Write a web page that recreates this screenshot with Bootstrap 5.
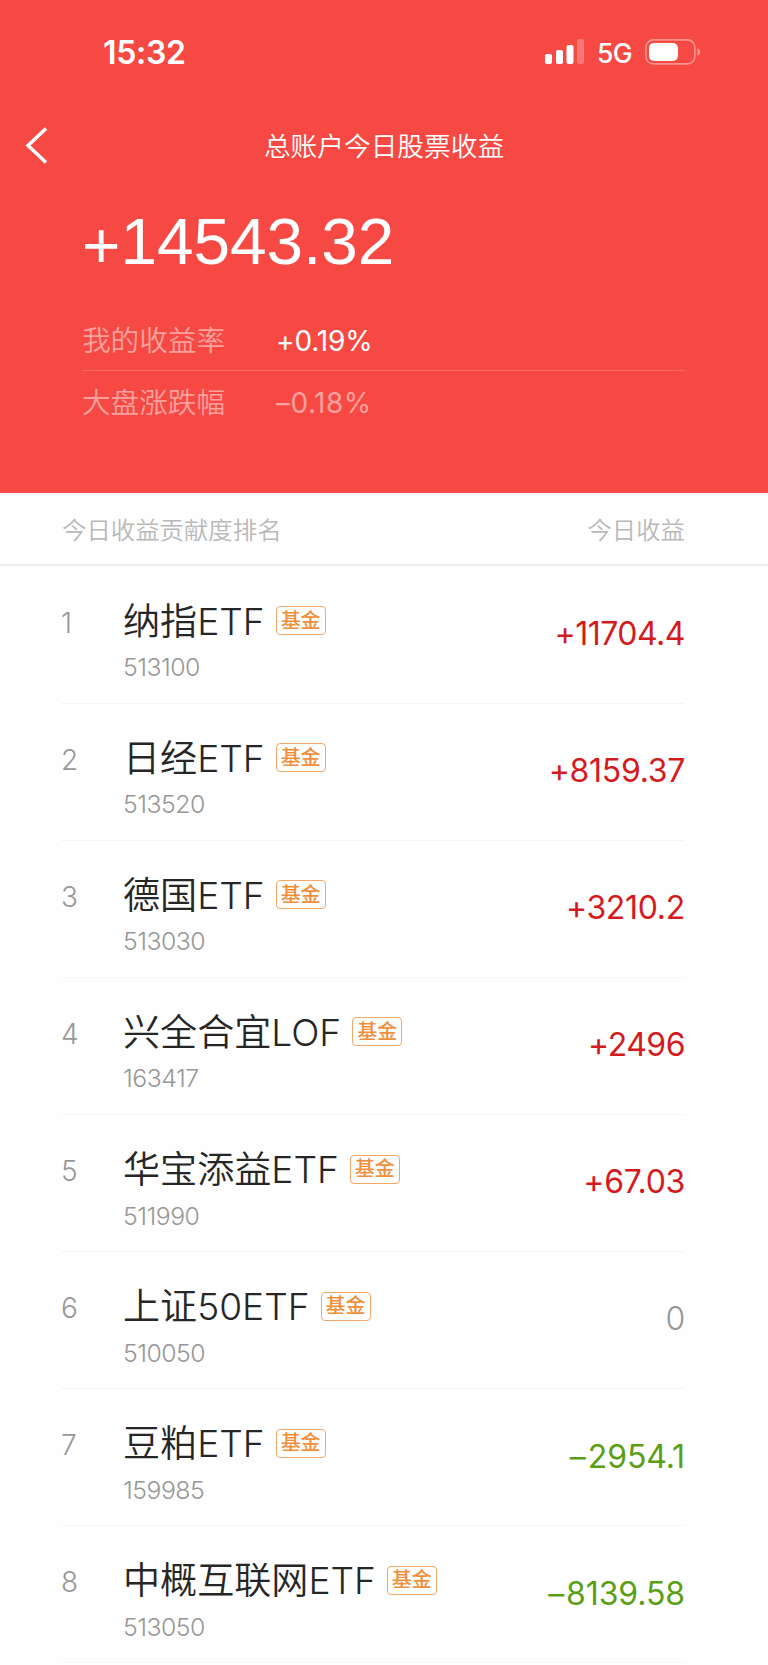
<!DOCTYPE html>
<html lang="zh-CN">
<head>
<meta charset="utf-8">
<meta name="viewport" content="width=device-width, initial-scale=1">
<title>总账户今日股票收益</title>
<link rel="stylesheet" href="https://cdn.jsdelivr.net/npm/bootstrap@5.3.0/dist/css/bootstrap.min.css">
<style>
body{font-family:Inter,"Noto Sans CJK SC",sans-serif;background:#fefefe;overflow-x:hidden}
.hero{background:#f64944;height:493px}
.status{height:104px;padding:0 67px 0 103px}
.clock{font-size:32px;font-weight:600;line-height:40px;letter-spacing:-.3px;margin-top:2px}
.net{font-size:26.5px;line-height:40px;font-weight:500;margin:2px 13px 0 13px;letter-spacing:-.6px}
.titlebar{height:84px;display:grid;grid-template-columns:72px 1fr 72px}
.titlebar svg{margin-top:-2px}
.titlebar h1{font-size:26.7px;font-weight:350;line-height:40px;margin:-1px 0 0}
.total{font-family:"Liberation Sans",sans-serif;font-size:65.7px;line-height:76px;height:76px;padding-left:82px;margin-top:16px}
.total .sign{display:inline-block;line-height:1;vertical-align:-4px}
.stats{margin:38px 83px 0 82px}
.stat{height:52px;font-size:28.6px;line-height:40px;font-weight:350;padding-top:3px}
.stat+.stat{border-top:1px solid #f86660;padding-top:12px}
.stat .k{width:194px;color:#fba19d}
.stat .v{font-size:28px;letter-spacing:-.15px;font-weight:400}
.stat .dim{color:#fba19d;letter-spacing:.5px}
.colhead{height:73px;padding:3px 83px 0 62px;border-bottom:2px solid #efefef;font-size:24.4px;font-weight:350;color:#b9b9b9}
.rank{margin:.7px 83px 0 61px}
.item{height:137.1px;border-bottom:1px solid #f5f5f5;padding-top:33px}
.no{width:62px;font-size:28px;line-height:47px;color:#979797;font-weight:350}
.name{font-size:37.1px;line-height:44px;color:#262626;font-weight:350;letter-spacing:0}
.code{font-size:24.8px;line-height:32px;color:#979797;font-weight:350;margin-top:7.500px;letter-spacing:-.5px}
.fund{width:50px;height:29px;border:1px solid #f2a869;border-radius:4px;color:#ef8f3c;font-size:20px;font-weight:500;margin:-2px 0 0 11px}
.amt{font-size:32px;line-height:40px;margin-top:14.300px;letter-spacing:-.3px;color:#979797;font-weight:400}
.amt.tight{letter-spacing:-.5px}
.amt.zero{font-weight:350}
.up{color:#d31b1e}.amt.down{color:#5a9e14;letter-spacing:-.1px}
.down .sign{margin-right:2px}
</style>
</head>
<body>
<header class="hero text-white">
  <div class="status d-flex align-items-center">
    <span class="clock me-auto">15:32</span>
    <svg width="40" height="26" viewBox="0 0 40 26" fill="#fff"><rect x="1" y="15" width="7" height="10" rx="2"/><rect x="12" y="11" width="7" height="14" rx="2"/><rect x="22.5" y="6" width="7" height="19" rx="2"/><rect x="33" y="0" width="7" height="25" rx="2" opacity=".25"/></svg>
    <span class="net">5G</span>
    <svg width="56" height="26" viewBox="0 0 56 26"><rect x=".9" y=".9" width="49" height="24" rx="7.5" fill="none" stroke="#fff" stroke-opacity=".4" stroke-width="1.6"/><rect x="4" y="4" width="29" height="18" rx="5" fill="#fff"/><path d="M52.5 9v8q2.700-1.200 2.700-4T52.500 9z" fill="#fff" opacity=".45"/></svg>
  </div>
  <div class="titlebar align-items-center">
    <svg width="50" height="40" viewBox="0 0 50 40" fill="none" stroke="#fff" stroke-width="3.500"><path d="M46 3.500 28 20.500 46 37.500"/></svg>
    <h1 class="text-center">总账户今日股票收益</h1>
  </div>
  <div class="total"><span class="sign">+</span>14543.32</div>
  <div class="stats">
    <div class="stat d-flex"><span class="k">我的收益率</span><span class="v">+0.19%</span></div>
    <div class="stat d-flex"><span class="k">大盘涨跌幅</span><span class="v dim">–0.18%</span></div>
  </div>
</header>
<main>
  <div class="colhead d-flex justify-content-between align-items-center"><span>今日收益贡献度排名</span><span>今日收益</span></div>
  <div class="rank">
    <div class="item d-flex"><span class="no">1</span><div class="flex-grow-1"><div class="d-flex align-items-center"><span class="name">纳指ETF</span><span class="fund d-flex align-items-center justify-content-center">基金</span></div><div class="code">513100</div></div><span class="amt up tight">+11704.4</span></div>
    <div class="item d-flex"><span class="no">2</span><div class="flex-grow-1"><div class="d-flex align-items-center"><span class="name">日经ETF</span><span class="fund d-flex align-items-center justify-content-center">基金</span></div><div class="code">513520</div></div><span class="amt up">+8159.37</span></div>
    <div class="item d-flex"><span class="no">3</span><div class="flex-grow-1"><div class="d-flex align-items-center"><span class="name">德国ETF</span><span class="fund d-flex align-items-center justify-content-center">基金</span></div><div class="code">513030</div></div><span class="amt up">+3210.2</span></div>
    <div class="item d-flex"><span class="no">4</span><div class="flex-grow-1"><div class="d-flex align-items-center"><span class="name">兴全合宜LOF</span><span class="fund d-flex align-items-center justify-content-center">基金</span></div><div class="code">163417</div></div><span class="amt up tight">+2496</span></div>
    <div class="item d-flex"><span class="no">5</span><div class="flex-grow-1"><div class="d-flex align-items-center"><span class="name">华宝添益ETF</span><span class="fund d-flex align-items-center justify-content-center">基金</span></div><div class="code">511990</div></div><span class="amt up">+67.03</span></div>
    <div class="item d-flex"><span class="no">6</span><div class="flex-grow-1"><div class="d-flex align-items-center"><span class="name">上证50ETF</span><span class="fund d-flex align-items-center justify-content-center">基金</span></div><div class="code">510050</div></div><span class="amt zero">0</span></div>
    <div class="item d-flex"><span class="no">7</span><div class="flex-grow-1"><div class="d-flex align-items-center"><span class="name">豆粕ETF</span><span class="fund d-flex align-items-center justify-content-center">基金</span></div><div class="code">159985</div></div><span class="amt down"><span class="sign">–</span>2954.1</span></div>
    <div class="item d-flex"><span class="no">8</span><div class="flex-grow-1"><div class="d-flex align-items-center"><span class="name">中概互联网ETF</span><span class="fund d-flex align-items-center justify-content-center">基金</span></div><div class="code">513050</div></div><span class="amt down"><span class="sign">–</span>8139.58</span></div>
  </div>
</main>
<script src="https://cdn.jsdelivr.net/npm/bootstrap@5.3.0/dist/js/bootstrap.bundle.min.js"></script>
</body>
</html>
